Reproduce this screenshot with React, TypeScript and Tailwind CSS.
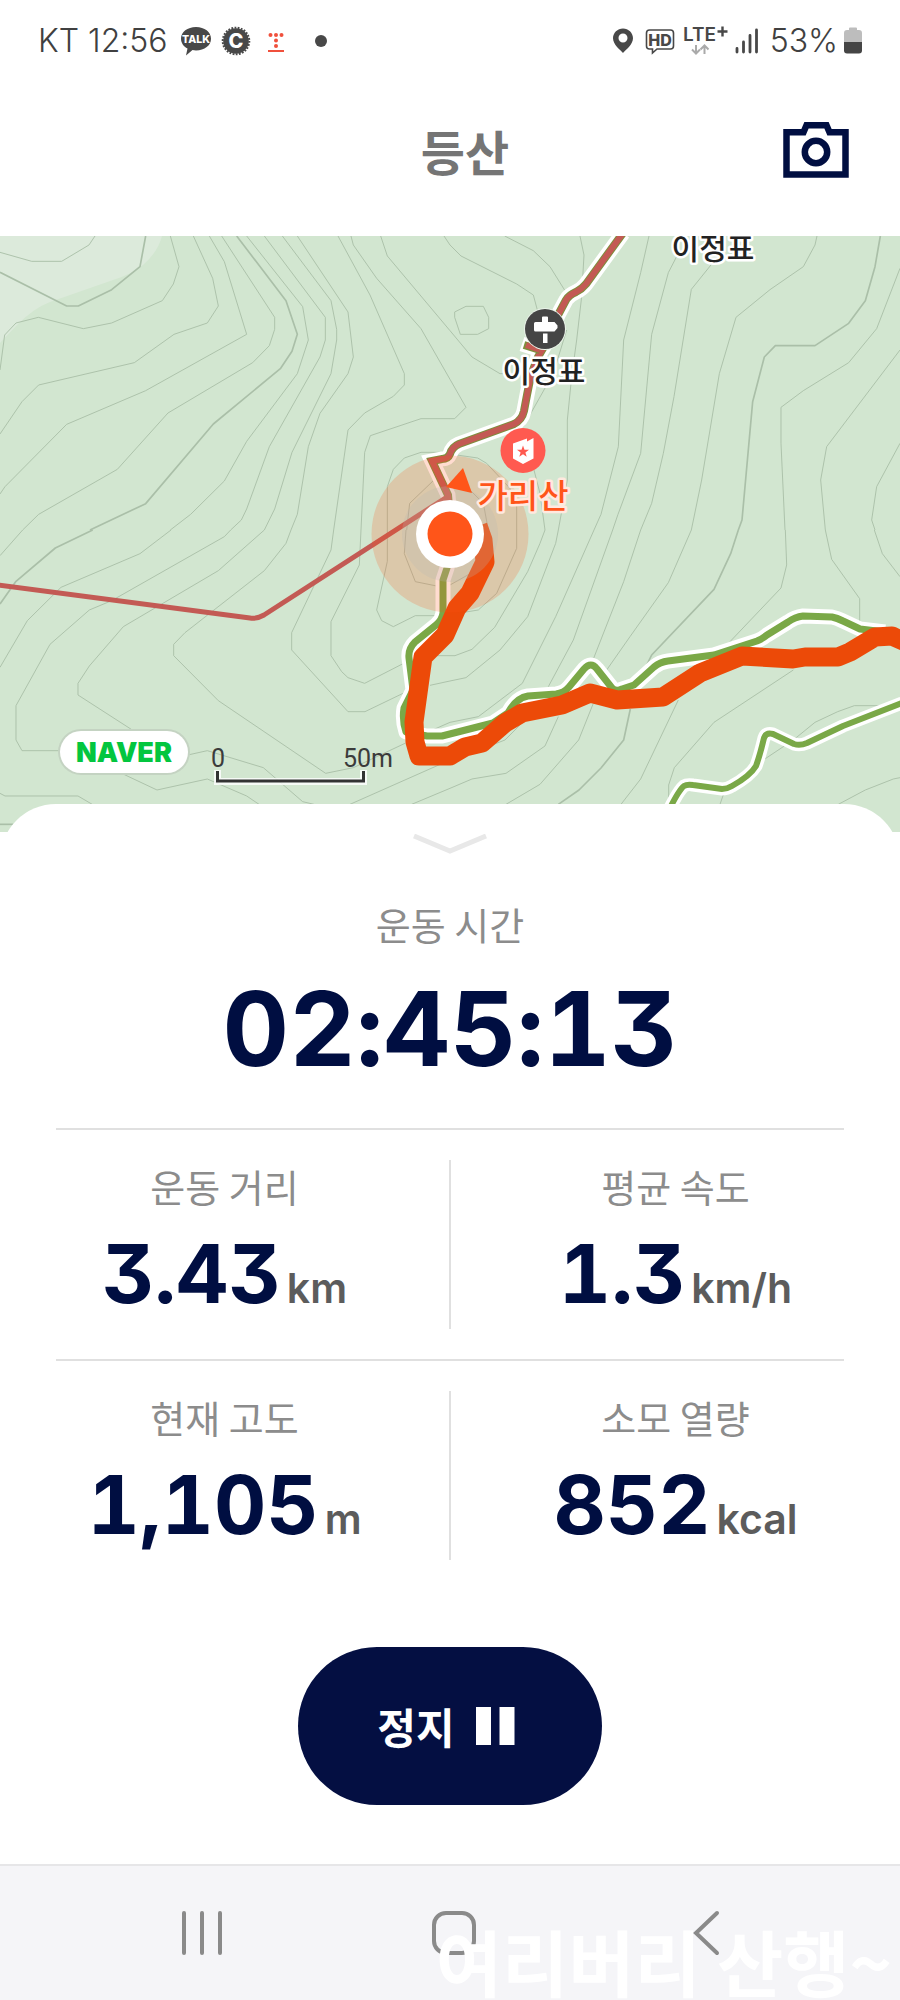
import type { ReactNode } from 'react';

type Tile = { x: number; y: number; minor: string[]; major: string[] };

// Contour lines, stored per map tile at three units to the pixel.
const tiles: Tile[] = [
  {
    x: 0,
    y: 230,
    minor: [
      '0,67 95,94 185,94 267,45 285,18',
      '0,420 14,315 48,279 115,262 250,296 335,279 487,212 520,162 537,110 511,18',
      '0,612 66,515 116,465 403,398 522,313 622,279 655,228 638,145 580,18',
      '0,792 15,770 200,583 437,482 740,313 673,95 628,18',
      '68,900 116,853 352,718 504,549 758,398 808,347 824,298 824,262 665,18',
      '511,900 572,853 673,753 740,634 892,431 925,330 908,230 740,18',
      '692,900 724,870 740,837 808,650 960,381 976,330 976,262 793,18',
      '793,900 824,837 876,667 993,431 1010,330 1010,298 993,212 847,18',
      '873,900 892,853 925,650 960,550 1044,431 1060,381 1044,246 892,18',
      '1001,900 1044,600 1094,549 1180,499 1213,465 1213,431 1110,195 1014,18',
      '1083,900 1094,667 1111,617 1263,566 1350,566',
      '1350,448 1263,296 1130,145 1060,45 1053,18',
      '1350,302 1162,78 1142,18',
      '1350,45 1332,18',
      '1162,900 1162,770 1180,718 1213,684 1263,667 1320,667',
      '1220,900 1229,820 1300,752',
    ],
    major: [
      '0,127 200,228 235,228 335,179 420,110 437,18',
      '270,900 437,821 640,582 842,415 876,364 892,313 858,212 710,18',
    ],
  },
  {
    x: 450,
    y: 230,
    minor: [
      '0,45 33,78 200,162 250,195 262,240',
      '164,18 250,62 300,110 350,190',
      '390,18 402,75 395,200 380,330 365,440 352,570 352,750 325,900',
      '14,246 48,229 100,229 116,262 116,296 83,313 31,313 14,262 14,246',
      '0,302 66,381 150,431 160,431',
      '0,448 48,532 14,566 0,566',
      '350,300 310,430 220,590',
      '252,720 270,790 285,900',
      '20,675 83,684 110,700 180,775 200,830 200,900',
      '60,780 100,820 115,900',
      '597,18 572,128 521,330 505,650 453,853 432,900',
      '690,60 655,128 605,313 572,670 504,853 488,900',
      '795,90 724,178 672,500 640,670 605,820 572,900',
      '1101,18 1095,45 1060,110 960,179 858,262 808,431 755,750 724,900',
      '1350,115 1280,296 1196,398 1060,482 993,532 993,640 1005,900',
      '1350,360 1130,650 1112,750 1126,900',
      '1350,640 1280,770 1265,870 1275,900',
    ],
    major: ['1291,18 1275,110 1246,212 1196,280 1095,347 976,347 943,381 908,515 876,870 865,900'],
  },
  {
    x: 0,
    y: 530,
    minor: [
      '0,77 68,0',
      '0,412 82,272 183,172 420,71 513,0',
      '180,662 66,662 48,630 48,527 150,343 268,240 335,212 673,20 692,0',
      '793,0 655,122 370,290 268,408 234,460 234,495 400,602',
      '873,0 858,40 793,122 555,308 521,343 521,377 655,512 977,730 1060,713 1215,640',
      '1001,0 993,60 875,308 875,360 1044,545 1095,545 1230,480',
      '1083,0 1078,105 993,275 993,377 1025,425 1044,443 1094,460 1215,398',
      '1162,0 1162,94 1130,240 1145,272 1180,290 1246,257 1310,257',
      '1218,0 1213,71 1246,155 1310,168',
      '568,674 622,662 790,713 908,815 942,823',
      '365,730 471,780 622,747 740,798 780,825',
      '0,790 15,798 234,798 280,825',
      '1050,823 1350,690',
      '1235,823 1350,775',
      '1290,466 1350,453',
      '1310,377 1350,377',
      '1275,610 1350,577',
    ],
    major: ['0,222 48,154 166,54 278,0', '0,883 40,883'],
  },
  {
    x: 450,
    y: 530,
    minor: [
      '115,0 110,70 80,120 0,165',
      '200,0 200,55 140,190 85,240 48,246',
      '285,0 270,40 233,125 134,292 66,358 15,377 0,377',
      '325,0 317,40 233,260 150,360 48,443 0,453',
      '432,0 317,260 217,460 85,560 0,577',
      '488,0 370,330 295,470',
      '572,0 521,155 425,400 400,440',
      '225,570 165,630 100,655',
      '325,560 285,648 168,730 66,747 0,775',
      '724,0 655,158 540,320 470,420',
      '430,520 386,630 270,763 168,823',
      '1006,0 1010,105 993,174 840,335',
      '685,510 572,747 513,823',
      '1126,0 1145,88 1229,206 1229,280',
      '1030,420 792,577 673,713 656,765 656,823',
      '1273,0 1297,71 1350,140',
      '1300,527 1213,527 1163,545 1095,577 1030,630 940,690',
      '825,780 810,823',
      '1350,743 1330,747 1246,780 1165,823',
    ],
    major: ['865,0 842,71 792,178 605,375 590,405', '541,537 521,630 453,714 387,780 325,823'],
  },
];

const upperTrail =
  'M623 233L586 284Q582 289 576 292Q569 295 566 300L558 315L549 338L538 357L531 375L527 395L524 411Q522 420 514 424L459 444Q452 447 450 454Q448 459 442 459L432 461L448 495L450 520';
const mainTrail =
  'M449 555L447 568L443 580V613Q442 620 436 625L415 642Q408 649 409 658L413 690L404 708Q402 720 406 732L427 736H442L493 723L508 713Q516 698 528 696L556 694Q564 693 569 687L584 669Q591 661 597 669L612 688Q616 692 622 689L634 685L654 667Q660 662 668 661L714 655L757 641Q762 639 767 635L788 622Q795 617 803 616L832 617Q837 618 843 621L860 629L885 632';
const lowerTrail =
  'M670 808Q679 790 684 786Q687 784 693 785L722 789Q727 789 732 786Q750 776 756 766Q760 755 764 738Q766 732 773 734L794 744Q800 746 807 743L843 726L902 703';
const track =
  '478,526 483,540 485,562 470,593 457,608 445,635 423,657 414,722 415,742 419,756 450,756 465,747 482,743 505,723 522,713 562,705 590,693 617,700 663,697 700,673 742,656 793,659 805,657 838,657 850,652 875,637 892,636 916,647';

function TrailMap() {
  return (
    <section aria-label="지도" className="relative h-[596px] overflow-hidden bg-[#d2e6d0]">
      <svg
        className="block h-full w-full"
        viewBox="0 236 900 596"
        preserveAspectRatio="xMidYMid slice"
        fill="none"
      >
        <path d="M0 236H162Q158 252 143 265Q130 275 113 280L50 302Q34 308 17 325L0 343Z" fill="#dceadb" />
        {tiles.map((t) => (
          <g
            key={`${t.x}-${t.y}`}
            transform={`translate(${t.x} ${t.y}) scale(0.33333)`}
            stroke="#aabfa8"
            strokeLinejoin="round"
          >
            {t.minor.map((p) => (
              <polyline key={p} points={p} strokeWidth="2.8" />
            ))}
            {t.major.map((p) => (
              <polyline key={p} points={p} strokeWidth="5" />
            ))}
          </g>
        ))}

        <g strokeLinejoin="round">
          <g stroke="#fff">
            <path d={upperTrail} strokeWidth="15" strokeLinejoin="miter" />
            <path d="M522 344L540 350" strokeWidth="15" />
            <path d={mainTrail} strokeWidth="15" />
            <path d={lowerTrail} strokeWidth="13" />
          </g>
          <path d={mainTrail} stroke="#7aa847" strokeWidth="7" />
          <path d={lowerTrail} stroke="#7aa847" strokeWidth="6" />
          <path d={upperTrail} stroke="#7d8f3c" strokeWidth="8" strokeLinejoin="miter" />
          <path d={upperTrail} stroke="#c35a54" strokeWidth="6" strokeLinejoin="miter" />
          <path d="M524 345L540 350" stroke="#7d8f3c" strokeWidth="8" />
          <path d="M526 345L540 350" stroke="#c35a54" strokeWidth="6" />
          <path d="M-2 585L250 618Q257 619 264 615L447 497" stroke="#c35a54" strokeWidth="5" />
        </g>
        <polyline points={track} stroke="#ec4a08" strokeWidth="19" strokeLinejoin="round" />

        <circle cx="450" cy="534" r="78.500" fill="#ff5014" fillOpacity="0.2" />
        <circle cx="450" cy="534" r="48" fill="#b8b8b4" fillOpacity="0.25" />
        <path d="M463 468L472 493L446 487Z" fill="#ff5519" />
        <circle cx="450" cy="534" r="34" fill="#fff" />
        <circle cx="450" cy="534" r="22.500" fill="#ff5519" />

        <circle cx="545" cy="329" r="21" fill="#e9f2e8" />
        <circle cx="545" cy="329" r="20" fill="#454545" />
        <path
          d="M543 316.500h4q1 0 1 1v4.500h6.500l3 3.500v2.500l-3 3.500H535.500q-1.500 0-1.500-1.500v-6.500q0-1.500 1.500-1.500h6.500v-4.500q0-1 1-1ZM543 333.500h4.500v9.500h-4.500Z"
          fill="#fff"
        />

        <circle cx="523" cy="450.500" r="22.500" fill="#ff5a50" />
        <path d="M513 443.500L527 438.500V441.500L533.500 438V458.500L523 464L513 458.500Z" fill="#fff" />
        <path
          d="M523 445.500l1.500 4.200 4.500.1-3.600 2.700 1.300 4.300-3.700-2.500-3.700 2.500 1.300-4.300-3.600-2.700 4.500-.1Z"
          fill="#ff5a50"
        />

        <g
          fontFamily="'Noto Sans CJK KR', sans-serif"
          textAnchor="middle"
          strokeLinejoin="round"
          paintOrder="stroke"
          stroke="#fff"
          strokeWidth="5"
          fontSize="30"
          fontWeight="500"
          fill="#222"
        >
          <text x="713" y="259">이정표</text>
          <text x="544" y="382">이정표</text>
          <text x="523" y="508" fontSize="33" fill="#ff5519" stroke="#ffe9df">
            가리산
          </text>
        </g>

        <path d="M217.500 770V781.500H363.500V770" stroke="#fff" strokeOpacity="0.8" strokeWidth="7" />
        <path d="M217.500 771V781H363.500V771" stroke="#333" strokeWidth="3" />
        <g fontFamily="Roboto, sans-serif" fontSize="25" fill="#3b3b3b" textAnchor="middle">
          <text x="218" y="767">0</text>
          <text x="368" y="767">50m</text>
        </g>
      </svg>
      <a
        href="#naver"
        className="absolute bottom-[59px] left-[60px] flex h-[42px] w-32 items-center justify-center rounded-full bg-white font-['Inter',sans-serif] text-[27px] leading-none font-black text-[#03c63f] ring-2 ring-[#c4d3c2]"
      >
        NAVER
      </a>
    </section>
  );
}

function StatusBar() {
  return (
    <div className="flex h-[82px] items-center justify-between pr-[38px] pl-[38px] font-['Inter',sans-serif] text-[32px] leading-none font-light text-[#404040]">
      <div className="flex items-center">
        <span>KT 12:56</span>
        <svg className="ml-3 h-8 w-8" viewBox="0 0 32 32" aria-label="TALK">
          <path
            d="M16 2C7.500 2 1 7 1 13.500c0 4.500 2.600 8 6.500 10L6 30.500l6.500-5.400c1 .2 2.300.3 3.500.3 8.500 0 15-5 15-11.700S24.500 2 16 2Z"
            fill="#484848"
          />
          <text x="16" y="18" fontSize="10.500" fontWeight="800" fill="#fff" textAnchor="middle">TALK</text>
        </svg>
        <svg className="ml-2 h-8 w-8" viewBox="0 0 32 32" aria-label="C">
          <circle cx="16" cy="16" r="12.800" fill="#484848" />
          <circle cx="16" cy="16" r="13.300" fill="none" stroke="#484848" strokeWidth="2" strokeDasharray="1.800 1.400" />
          <text x="16" y="23" fontSize="20" fontWeight="800" fill="#fff" textAnchor="middle">C</text>
        </svg>
        <svg className="ml-3 h-8 w-6" viewBox="0 0 24 32" aria-hidden="true" fill="#f0503c">
          <circle cx="6.500" cy="10" r="2" />
          <circle cx="12" cy="10" r="2" />
          <circle cx="17.500" cy="10" r="2" />
          <circle cx="12" cy="15.500" r="2" />
          <circle cx="12" cy="21" r="2" />
          <path d="M4 25h16v2H4z" />
        </svg>
        <span className="ml-[27px] h-3 w-3 rounded-full bg-[#484848]" />
      </div>
      <div className="flex items-center">
        <svg className="h-8 w-5" viewBox="0 0 20 32" aria-hidden="true">
          <path
            d="M10 3.500C4.500 3.500 0 7.800 0 13.200 0 19.500 7.500 25 10 28c2.500-3 10-8.500 10-14.800 0-5.400-4.500-9.700-10-9.700Zm0 5a4.500 4.500 0 1 1 0 9 4.500 4.500 0 0 1 0-9Z"
            fill="#484848"
          />
        </svg>
        <svg className="ml-3 h-8 w-[30px]" viewBox="0 0 30 32" aria-label="HD">
          <path
            d="M4.500 5h21q3 0 3 3v13q0 3-3 3H12l-4.500 4V24h-3q-3 0-3-3V8q0-3 3-3Z"
            fill="none"
            stroke="#484848"
            strokeWidth="1.600"
          />
          <text x="15" y="20.500" fontSize="16" fontWeight="800" fill="#484848" textAnchor="middle">HD</text>
        </svg>
        <svg className="ml-2 h-8 w-[46px] overflow-visible" viewBox="0 0 46 32" aria-label="LTE+">
          <text x="0" y="16" fontSize="19" fontWeight="600" fill="#484848">LTE</text>
          <path d="M34.500 6.500h10M39.500 1.500v10" stroke="#484848" strokeWidth="2.400" fill="none" />
          <path
            d="M13 20v8M9 24.500l4 4 4-4M21.500 29v-8M17.500 24.500l4-4 4 4"
            stroke="#aaa"
            strokeWidth="2"
            fill="none"
          />
        </svg>
        <svg className="ml-[6px] h-8 w-6" viewBox="0 0 24 32" aria-hidden="true">
          <path
            d="M2 23.500v3.500M8.500 17v10M15 10.500V27M21.500 5v22"
            stroke="#484848"
            strokeWidth="2.800"
            strokeLinecap="round"
          />
        </svg>
        <span className="ml-[11px]">53%</span>
        <svg className="ml-1.5 h-8 w-[18px]" viewBox="0 0 18 32" aria-hidden="true">
          <path d="M3 5h2V3.500Q5 2.500 6 2.500h6q1 0 1 1V5h2q3 0 3 3v9H0V8q0-3 3-3Z" fill="#bdbdbd" />
          <path d="M0 17h18v8.500q0 3-3 3H3q-3 0-3-3Z" fill="#454545" />
        </svg>
      </div>
    </div>
  );
}

function Metric({ label, value, unit }: { label: string; value: string; unit: string }) {
  return (
    <div className="flex flex-1 flex-col items-center">
      <dt className="text-[38px] leading-[52px] text-[#8c8c8c]">{label}</dt>
      <dd className="mt-5 flex items-baseline gap-1.5 font-['Inter','Noto_Sans_CJK_KR',sans-serif] leading-[84px] font-bold text-[#000e41]">
        <span className="text-[81px] [font-feature-settings:'tnum','cv09','calt'_0]">{value}</span>
        <span className="text-[41px] font-semibold text-[#5c5c5c]">{unit}</span>
      </dd>
    </div>
  );
}

function MetricRow({ children }: { children: ReactNode }) {
  return <dl className="flex h-[229px] py-[30px]">{children}</dl>;
}

function Rule() {
  return <hr className="mx-14 border-t-2 border-[#e0e0e0]" />;
}

export default function App() {
  return (
    <div className="flex min-h-screen flex-col bg-white font-['Noto_Sans_CJK_KR',sans-serif]">
      <StatusBar />
      <header className="grid h-[154px] grid-cols-3 items-center pr-[50px] pb-[18px] pl-20">
        <h1 className="col-start-2 text-center text-[48px] leading-none font-bold text-[#757575]">등산</h1>
        <button type="button" aria-label="카메라" className="justify-self-end">
          <svg className="h-14 w-[68px]" viewBox="0 0 68 56" fill="none" stroke="#000e41" strokeWidth="6.500">
            <path d="M4.500 10.300H21.500L24.500 3.300H44.500L47.500 10.300H63.500V52.500H4.500Z" />
            <circle cx="34" cy="30" r="11.200" />
          </svg>
        </button>
      </header>
      <TrailMap />

      <main className="relative -mt-7 flex grow flex-col rounded-t-[56px] bg-white pt-[30px]">
        <button type="button" aria-label="접기" className="self-center">
          <svg className="block h-5 w-[74px]" viewBox="0 0 74 20" fill="none">
            <path d="M1 2L37 17L73 2" stroke="#e8e8e8" strokeWidth="5" />
          </svg>
        </button>
        <section className="mt-11 text-center">
          <h2 className="text-[38px] leading-[52px] text-[#8c8c8c]">운동 시간</h2>
          <p className="mt-[27px] mb-[47px] font-['Inter',sans-serif] text-[103px] leading-[104px] font-bold text-[#000e41] [font-feature-settings:'tnum','cv09','calt'_0]">
            02:45:13
          </p>
        </section>
        <Rule />
        <MetricRow>
          <Metric label="운동 거리" value="3.43" unit="km" />
          <div className="w-0.5 bg-[#e0e0e0]" />
          <Metric label="평균 속도" value="1.3" unit="km/h" />
        </MetricRow>
        <Rule />
        <MetricRow>
          <Metric label="현재 고도" value="1,105" unit="m" />
          <div className="w-0.5 bg-[#e0e0e0]" />
          <Metric label="소모 열량" value="852" unit="kcal" />
        </MetricRow>
        <button
          type="button"
          className="mt-[57px] mb-[58px] flex h-[158px] w-[304px] items-center justify-center gap-5 self-center rounded-full bg-[#040f42] pr-2 text-[42px] leading-none font-bold text-white"
        >
          정지
          <svg className="h-10 w-10" viewBox="0 0 40 40" fill="#fff" aria-hidden="true">
            <path d="M1 1h15v38H1zM24.500 1h15v38h-15z" />
          </svg>
        </button>
      </main>

      <nav className="relative grid h-[136px] grid-cols-3 items-center justify-items-center overflow-hidden border-t-2 border-[#e6e6e8] bg-[#f5f5f8] pr-[68px] pl-[76px]">
        <button type="button" aria-label="최근 앱">
          <svg className="h-12 w-12" viewBox="0 0 48 48" stroke="#8a8a8a" strokeWidth="4" strokeLinecap="round">
            <path d="M6 4v40M24 4v40M42 4v40" />
          </svg>
        </button>
        <button type="button" aria-label="홈">
          <svg className="h-12 w-12" viewBox="0 0 48 48" fill="none" stroke="#8a8a8a" strokeWidth="4">
            <rect x="4" y="4" width="40" height="40" rx="12" />
          </svg>
        </button>
        <button type="button" aria-label="뒤로">
          <svg className="h-12 w-12" viewBox="0 0 48 48" fill="none" stroke="#8a8a8a" strokeWidth="4" strokeLinecap="round">
            <path d="M35 4L14 24L35 44" />
          </svg>
        </button>
        <p className="pointer-events-none absolute right-2 bottom-1 text-[72px] leading-[72px] font-bold whitespace-nowrap text-white">
          여리버리 산행~
        </p>
      </nav>
    </div>
  );
}
